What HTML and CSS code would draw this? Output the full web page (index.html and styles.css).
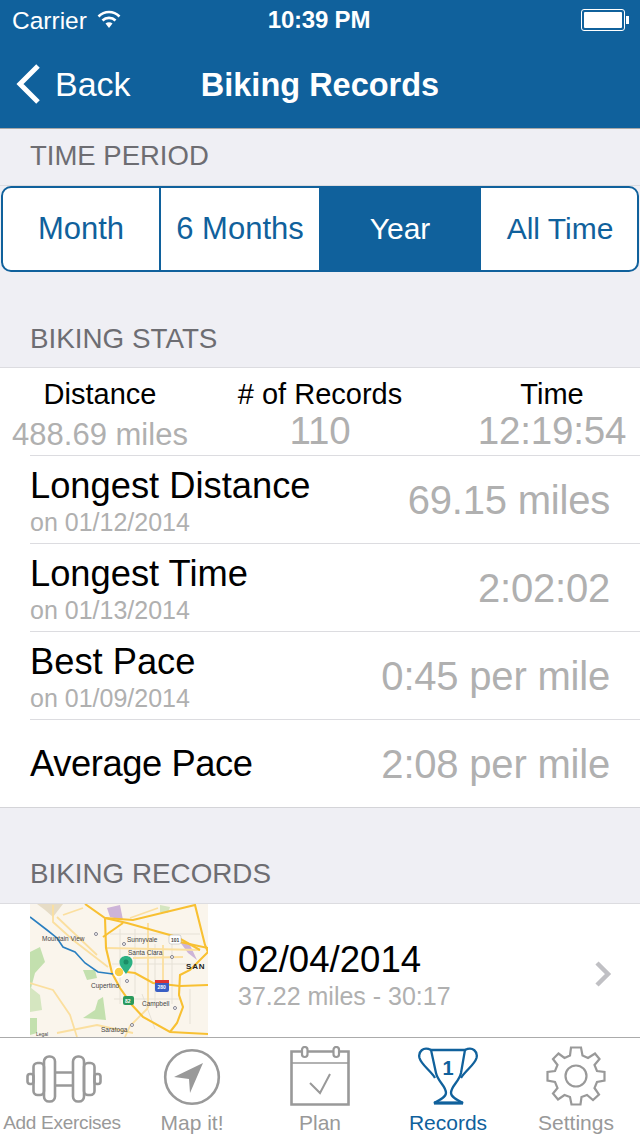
FILE: index.html
```html
<!DOCTYPE html>
<html lang="en">
<head>
<meta charset="utf-8">
<title>Biking Records</title>
<link rel="stylesheet" href="styles.css">
</head>
<body>
<div class="app">
  <header class="top">
    <div class="status">
      <div class="status-left">
        <span>Carrier</span>
        <svg class="wifi" width="24" height="20" viewBox="0 0 24 20"><path d="M1.500 7.500C7.500 1.500 16.500 1.500 22.500 7.500" fill="none" stroke="#fff" stroke-width="2.600"/><path d="M5.500 11.500C9 8 15 8 18.500 11.500" fill="none" stroke="#fff" stroke-width="2.600"/><path d="M8.500 14.500C10.500 12.800 13.500 12.800 15.500 14.500L12 19Z" fill="#fff"/></svg>
      </div>
      <div class="status-time">10:39 PM</div>
      <div class="status-right">
        <span class="battery"><span class="battery-fill"></span></span><span class="battery-tip"></span>
      </div>
    </div>
    <nav class="nav">
      <a class="back">
        <svg width="28" height="42" viewBox="0 0 28 42"><path d="M24 3L6 21L24 39" fill="none" stroke="#fff" stroke-width="5"/></svg>
        <span>Back</span>
      </a>
      <h1 class="nav-title">Biking Records</h1>
    </nav>
  </header>

  <main class="main">
    <div class="period-head">TIME PERIOD</div>
    <div class="segments">
      <div class="seg seg-line">Month</div>
      <div class="seg">6 Months</div>
      <div class="seg seg-on">Year</div>
      <div class="seg seg-tight">All Time</div>
    </div>

    <div class="section-head stats-head">BIKING STATS</div>
    <section class="stats">
      <div class="summary">
        <div class="sum-col"><div class="sum-label">Distance</div><div class="sum-value sum-small">488.69 miles</div></div>
        <div class="sum-col"><div class="sum-label">#&nbsp;of Records</div><div class="sum-value">110</div></div>
        <div class="sum-col sum-time"><div class="sum-label">Time</div><div class="sum-value">12:19:54</div></div>
      </div>
      <div class="row"><div class="row-text"><div class="row-title">Longest Distance</div><div class="row-sub">on 01/12/2014</div></div><div class="row-value">69.15 miles</div></div>
      <div class="row"><div class="row-text"><div class="row-title">Longest Time</div><div class="row-sub">on 01/13/2014</div></div><div class="row-value">2:02:02</div></div>
      <div class="row"><div class="row-text"><div class="row-title">Best Pace</div><div class="row-sub">on 01/09/2014</div></div><div class="row-value">0:45 per mile</div></div>
      <div class="row row-last"><div class="row-text"><div class="row-title">Average Pace</div></div><div class="row-value">2:08 per mile</div></div>
    </section>

    <div class="section-head records-head">BIKING RECORDS</div>
    <section class="record">
      <svg class="map" width="178" height="133" viewBox="0 0 178 133">
        <rect width="178" height="133" fill="#faf5ec"/>
        <path d="M7 0H33L23 13L15 6Z" fill="#e6dcc6"/>
        <path d="M77 4L90 1L93 16L80 13Z" fill="#cdb4d8"/>
        <path d="M150 38L160 41L167 56L158 49Z" fill="#cdb4d8"/>
        <path d="M130 1L140 3L138 9L130 8Z" fill="#d5e6c0"/>
        <path d="M0 48L10 43L15 58L5 69L0 88Z" fill="#c3e0ae"/>
        <path d="M53 66L65 66L67 74L57 76Z" fill="#c3e0ae"/>
        <path d="M0 83L10 91L12 106L0 108Z" fill="#d5e6c0"/>
        <path d="M0 114H7V129L0 131Z" fill="#c3e0ae"/>
        <path d="M68 96L73 93L76 116L53 114L65 106Z" fill="#c3e0ae"/>
        <g fill="none" stroke="#e6e1d6" stroke-width="1">
          <path d="M90 25V100"/><path d="M105 25V90"/><path d="M125 40V100"/><path d="M142 40V100"/><path d="M80 30H170"/><path d="M82 60H170"/><path d="M84 95H150"/><path d="M40 25L60 45"/><path d="M112 90L125 125"/><path d="M160 85V120"/>
        </g>
        <g fill="none" stroke="#fbdf9f" stroke-width="1.800">
          <path d="M23 1V18L43 36L78 63"/><path d="M27 13L67 51"/><path d="M118 19V104"/><path d="M133 41V78"/><path d="M77 44L170 46"/><path d="M103 54L153 53"/><path d="M0 79L23 86L40 111L47 133"/><path d="M27 129L67 121L103 129"/><path d="M33 11L53 4"/><path d="M128 4L100 14"/><path d="M118 104L100 122L95 133"/>
        </g>
        <g fill="none" stroke="#f8c032" stroke-width="2.100">
          <path d="M55 0L75 14L97 19L147 33L170 46"/>
          <path d="M75 14L103 16L165 1L175 41L178 48"/>
          <path d="M75 14L76 44L82 69L90 84L102 101L113 113L140 128L178 130"/>
          <path d="M97 68L105 69L123 79L150 82L178 81"/>
          <path d="M178 48L160 66L150 71L149 91L153 103L147 119L140 128"/>
          <path d="M73 33L93 19"/>
          <path d="M150 38L178 44"/>
        </g>
        <path d="M0 13L17 26L27 34L33 43L45 48L55 59L68 68L83 70" fill="none" stroke="#2a7fc0" stroke-width="1.600"/>
        <g fill="#fff" stroke="#667" stroke-width=".8">
          <circle cx="66" cy="30" r="1.500"/><circle cx="94" cy="40" r="1.500"/><circle cx="142" cy="53" r="1.500"/><circle cx="145" cy="104" r="1.500"/><circle cx="102" cy="121" r="1.500"/><circle cx="97" cy="77" r="1.500"/>
        </g>
        <circle cx="89" cy="68" r="5" fill="#fbcf45" stroke="#fff" stroke-width="1.500"/>
        <path d="M96 70C92 64 89.500 62 89.500 58C89.500 50 102.500 50 102.500 58C102.500 62 100 64 96 70Z" fill="#2cb183"/>
        <circle cx="96" cy="58" r="2.500" fill="#1b8c66"/>
        <rect x="125" y="76" width="14" height="12" rx="2" fill="#3a5fc4"/><rect x="125" y="76" width="14" height="3" fill="#d33"/>
        <rect x="93" y="92" width="11" height="9" rx="2" fill="#2a9a5c"/>
        <rect x="139" y="31" width="12" height="9" rx="2" fill="#fff" stroke="#aaa" stroke-width=".5"/>
        <g class="map-text">
          <text x="12" y="37">Mountain View</text>
          <text x="97" y="38">Sunnyvale</text>
          <text x="98" y="51">Santa Clara</text>
          <text x="61" y="84">Cupertino</text>
          <text x="112" y="102">Campbell</text>
          <text x="71" y="128">Saratoga</text>
          <text class="map-bold" x="156" y="65">SAN</text>
          <text class="map-tiny" x="141" y="38">101</text>
          <text class="map-tiny map-light" x="127.500" y="85">280</text>
          <text class="map-tiny map-light" x="95" y="99">82</text>
          <text class="map-legal" x="6" y="132">Legal</text>
        </g>
      </svg>
      <div class="record-text">
        <div class="record-date">02/04/2014</div>
        <div class="record-sub">37.22 miles - 30:17</div>
      </div>
      <svg class="chevron" width="18" height="28" viewBox="0 0 18 28"><path d="M3 3L14 14L3 25" fill="none" stroke="#c0c0c4" stroke-width="4.500"/></svg>
    </section>
  </main>

  <footer class="tabs">
    <div class="tab">
      <svg class="tab-icon" width="76" height="60" viewBox="0 -9 76 60"><g fill="none" stroke="#999" stroke-width="2.600"><rect x="1.500" y="19" width="6" height="10" rx="2.500"/><rect x="68.500" y="19" width="6" height="10" rx="2.500"/><rect x="7.500" y="8" width="10.500" height="32" rx="4"/><rect x="58" y="8" width="10.500" height="32" rx="4"/><rect x="18" y="1.500" width="11" height="45" rx="5"/><rect x="47" y="1.500" width="11" height="45" rx="5"/><path d="M29 17.500H47M29 30.500H47"/></g></svg>
      <span class="tab-label tab-label-fit">Add Exercises</span>
    </div>
    <div class="tab">
      <svg class="tab-icon" width="58" height="60" viewBox="0 0 58 60"><circle cx="29" cy="31" r="26.800" fill="none" stroke="#999" stroke-width="2.600"/><path d="M40 17L11 31L26 33L27 47Z" fill="#999"/></svg>
      <span class="tab-label">Map it!</span>
    </div>
    <div class="tab">
      <svg class="tab-icon" width="60" height="60" viewBox="0 0 60 60"><path d="M1.500 5.500H58.500V58.500H1.500Z" fill="none" stroke="#999" stroke-width="2.600"/><path d="M1.500 17H58.500" stroke="#999" stroke-width="1.500"/><rect x="12" y="1" width="5.500" height="10" rx="2.700" fill="#fff" stroke="#999" stroke-width="2.200"/><rect x="43.500" y="1" width="5.500" height="10" rx="2.700" fill="#fff" stroke="#999" stroke-width="2.200"/><path d="M20 37L30 47L40 28" fill="none" stroke="#999" stroke-width="2"/></svg>
      <span class="tab-label">Plan</span>
    </div>
    <div class="tab tab-on">
      <svg class="tab-icon" width="60" height="60" viewBox="0 0 60 60"><g fill="none" stroke="#10619c" stroke-width="2.300"><path d="M13 4H47L43 27C41 36 33 40 33 47C33 51 39 54 45 57H16C22 54 28 51 28 47C28 40 20 36 18 27Z"/><path d="M13 4C5 0 0 6 1.500 12C3.500 19 13 25 17 32"/><path d="M47 4C55 0 60 6 58.500 12C56.500 19 47 25 43 32"/></g><path d="M16 55.500H45V58.500H16Z" fill="#10619c"/><text class="trophy-num" x="30" y="29">1</text></svg>
      <span class="tab-label">Records</span>
    </div>
    <div class="tab">
      <svg class="tab-icon" width="60" height="60" viewBox="0 0 60 60"><path d="M25 1.500H35L36.500 9.500L42 12L49 7.500L53.500 13L48.500 19L51 25L58.500 26V34.500L51 36L48.500 42L53 48.500L47 54L41 49L35.500 51L34.500 58.500H25.500L24 51L18.500 49L12 53.500L7 47.500L11.500 42L9 36L1.500 34.500V26L9 25L11.500 19L7 13L12.500 7.500L18.500 12L24 9.500Z" fill="none" stroke="#999" stroke-width="2.200"/><circle cx="30" cy="30" r="10.500" fill="none" stroke="#999" stroke-width="2.200"/></svg>
      <span class="tab-label">Settings</span>
    </div>
  </footer>
</div>
</body>
</html>
```
FILE: styles.css
```css
* { box-sizing: border-box; margin: 0; padding: 0; }
html, body { width: 640px; height: 1136px; overflow: hidden; }
body { font-family: "Liberation Sans", Arial, sans-serif; background: #efeff4; color: #000; }
.app { width: 640px; height: 1136px; display: flex; flex-direction: column; }

.top { height: 129px; flex: none; background: #10619c; color: #fff; border-bottom: 1px solid #a8a8a8; }
.status { height: 40px; padding: 0 11px 0 12px; display: grid; grid-template-columns: 1fr auto 1fr; align-items: center; font-size: 24.5px; }
.status-left { display: flex; align-items: center; gap: 10px; padding-top: 2px; }
.wifi { margin-top: -5px; }
.status-time { font-weight: 700; font-size: 24px; letter-spacing: -0.2px; margin-right: 3px; }
.status-right { display: flex; justify-content: flex-end; align-items: center; }
.battery { width: 44px; height: 22px; border: 1px solid #fff; border-radius: 3px; padding: 2px; display: block; }
.battery-fill { display: block; height: 100%; background: #fff; border-radius: 1px; }
.battery-tip { width: 3px; height: 8px; background: #fff; margin-left: 1px; }
.nav { height: 88px; position: relative; display: flex; align-items: center; justify-content: center; padding-top: 2px; }
.back { position: absolute; left: 14px; top: 9px; display: flex; align-items: center; gap: 13px; font-size: 34px; height: 70px; }
.nav-title { font-size: 32.500px; font-weight: 700; }

.main { flex: 1; min-height: 0; overflow: hidden; }
.period-head { height: 57px; padding: 0 0 2px 30px; display: flex; align-items: center; font-size: 27.5px; color: #6d6d72; border-bottom: 1px solid #dcdce0; }
.segments { margin: 0 1px; height: 86px; display: grid; grid-template-columns: 158px 158px 162px 1fr; background: #fff; border: 2px solid #10619c; border-radius: 10px; overflow: hidden; }
.seg { display: flex; align-items: center; justify-content: center; font-size: 31px; color: #10619c; }
.seg-line { border-right: 2px solid #10619c; }
.seg-on { background: #10619c; color: #fff; font-size: 30px; }
.seg-tight { font-size: 30px; padding-left: 2px; }

.section-head { padding-left: 30px; display: flex; align-items: center; font-size: 27.8px; color: #6d6d72; border-bottom: 1px solid #dcdce0; }
.stats-head { height: 96px; padding-top: 38px; }
.records-head { height: 96px; padding-top: 36px; }

.stats { background: #fff; border-bottom: 1px solid #d4d4d8; }
.summary { height: 87px; display: grid; grid-template-columns: 200px 240px 200px; text-align: center; }
.sum-label { font-size: 29px; line-height: 32px; margin-top: 10px; }
.sum-value { font-size: 38.500px; line-height: 42px; color: #b0b0b0; letter-spacing: -0.2px; }
.sum-value.sum-small { font-size: 31px; letter-spacing: 0; padding-top: 4px; }
.sum-time { padding-left: 24px; }
.row { margin-left: 30px; height: 88px; border-top: 1px solid #dcdce0; display: flex; align-items: center; justify-content: space-between; padding-right: 30px; }
.row-text { padding-top: 2px; }
.row-last .row-text { padding-top: 0; }
.row-title { font-size: 36.3px; line-height: 42px; }
.row-last .row-title { letter-spacing: -0.4px; }
.row-sub { font-size: 25px; line-height: 30px; color: #b0b0b0; }
.row-value { font-size: 40px; letter-spacing: -0.2px; color: #b0b0b0; padding-top: 1px; }

.record { background: #fff; height: 140px; display: flex; align-items: flex-start; padding-left: 30px; }
.map { flex: none; display: block; }
.map-text text { font-size: 6.5px; fill: #444; font-family: "Liberation Sans", Arial, sans-serif; }
.map-text .map-bold { font-weight: 700; font-size: 8px; fill: #222; letter-spacing: 0.8px; }
.map-text .map-tiny { font-size: 5px; font-weight: 700; }
.map-text .map-light { fill: #fff; }
.map-text .map-legal { font-size: 5px; }
.record-text { margin-left: 30px; margin-top: 35px; flex: 1; }
.record-date { font-size: 36.6px; line-height: 42px; }
.record-sub { font-size: 25px; line-height: 30px; color: #b0b0b0; }
.chevron { margin: 56px 28px 0 0; flex: none; }

.tabs { height: 99px; flex: none; background: #fff; border-top: 1px solid #ababab; display: grid; grid-template-columns: repeat(5, 128px); }
.tab { position: relative; display: flex; flex-direction: column; align-items: center; color: #999; }
.tab-icon { margin-top: 8px; display: block; }
.tab-label { position: absolute; left: 0; right: 0; top: 73px; text-align: center; font-size: 21px; line-height: 24px; white-space: nowrap; }
.tab-label-fit { left: -4px; font-size: 19px; letter-spacing: -0.3px; }
.tab-on { color: #10619c; }
.trophy-num { font-family: "Liberation Sans", Arial, sans-serif; font-size: 20px; font-weight: 700; fill: #10619c; text-anchor: middle; }
```
